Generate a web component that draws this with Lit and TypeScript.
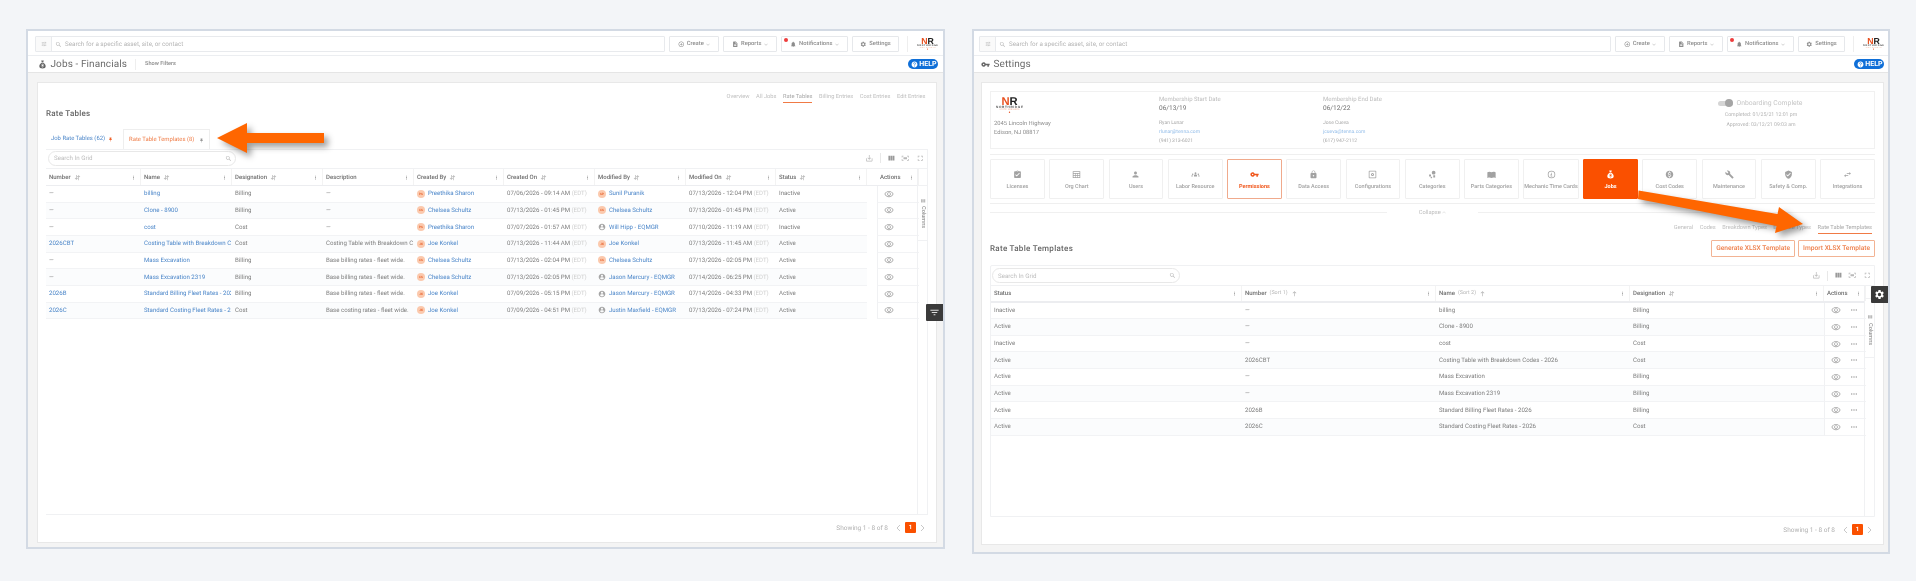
import { LitElement, html, css, nothing } from "lit";
import { customElement } from "lit/decorators.js";

const I = {
  tune: "M3 17v2h6v-2H3zM3 5v2h10V5H3zm10 16v-2h8v-2h-8v-2h-2v6h2zM7 9v2H3v2h4v2h2V9H7zm14 4v-2H11v2h10zm-6-4h2V7h4V5h-4V3h-2v6z",
  search: "M15.5 14h-.79l-.28-.27C15.41 12.59 16 11.11 16 9.5 16 5.91 13.09 3 9.5 3S3 5.91 3 9.5 5.91 16 9.5 16c1.61 0 3.09-.59 4.23-1.57l.27.28v.79l5 4.99L20.49 19l-4.99-5zm-6 0C7.01 14 5 11.99 5 9.5S7.01 5 9.5 5 14 7.01 14 9.5 11.99 14 9.5 14z",
  add: "M13 7h-2v4H7v2h4v4h2v-4h4v-2h-4V7zm-1-5C6.48 2 2 6.48 2 12s4.48 10 10 10 10-4.48 10-10S17.52 2 12 2zm0 18c-4.41 0-8-3.59-8-8s3.59-8 8-8 8 3.59 8 8-3.59 8-8 8z",
  doc: "M14 2H6c-1.1 0-2 .9-2 2v16c0 1.1.9 2 2 2h12c1.1 0 2-.9 2-2V8l-6-6zm2 16H8v-2h8v2zm0-4H8v-2h8v2zm-3-5V3.5L18.5 9H13z",
  bell: "M12 22c1.1 0 2-.9 2-2h-4c0 1.1.89 2 2 2zm6-6v-5c0-3.07-1.64-5.64-4.5-6.32V4c0-.83-.67-1.5-1.5-1.5s-1.5.67-1.5 1.5v.68C7.63 5.36 6 7.92 6 11v5l-2 2v1h16v-1l-2-2z",
  gear: "M19.14 12.94c.04-.3.06-.61.06-.94 0-.32-.02-.64-.07-.94l2.03-1.58c.18-.14.23-.41.12-.61l-1.92-3.32c-.12-.22-.37-.29-.59-.22l-2.39.96c-.5-.38-1.03-.7-1.62-.94l-.36-2.54c-.04-.24-.24-.41-.48-.41h-3.84c-.24 0-.43.17-.47.41l-.36 2.54c-.59.24-1.13.57-1.62.94l-2.39-.96c-.22-.08-.47 0-.59.22L2.74 8.87c-.12.21-.08.47.12.61l2.03 1.58c-.05.3-.09.63-.09.94s.02.64.07.94l-2.03 1.58c-.18.14-.23.41-.12.61l1.92 3.32c.12.22.37.29.59.22l2.39-.96c.5.38 1.03.7 1.62.94l.36 2.54c.05.24.24.41.48.41h3.84c.24 0 .44-.17.47-.41l.36-2.54c.59-.24 1.13-.56 1.62-.94l2.39.96c.22.08.47 0 .59-.22l1.92-3.32c.12-.22.07-.47-.12-.61l-2.01-1.58zM12 15.6c-1.98 0-3.6-1.62-3.6-3.6s1.62-3.6 3.6-3.6 3.6 1.62 3.6 3.6-1.62 3.6-3.6 3.6z",
  help: "M12 2C6.48 2 2 6.48 2 12s4.48 10 10 10 10-4.48 10-10S17.52 2 12 2zm1 17h-2v-2h2v2zm2.07-7.75l-.9.92C13.45 12.9 13 13.5 13 15h-2v-.5c0-1.1.45-2.1 1.17-2.83l1.24-1.26c.37-.36.59-.86.59-1.41 0-1.1-.9-2-2-2s-2 .9-2 2H8c0-2.21 1.79-4 4-4s4 1.79 4 4c0 .88-.36 1.68-.93 2.25z",
  bag: "M8.5 1.5h7L14 6h-4L8.5 1.5zM9.6 7h4.8C18 9.3 20.5 13 20.5 16.5c0 3.6-3 6-8.5 6s-8.5-2.4-8.5-6C3.5 13 6 9.3 9.6 7zm1.6 3v1.2c-1.3.3-2.2 1.2-2.2 2.4 0 1.5 1.2 2.1 2.7 2.5 1.1.3 1.5.6 1.5 1.1 0 .5-.5.9-1.3.9-.9 0-1.5-.4-1.6-1.1H9c.1 1.3 1 2.2 2.2 2.5V20h1.6v-1.5c1.3-.3 2.2-1.2 2.2-2.4 0-1.6-1.3-2.2-2.8-2.6-1-.3-1.4-.5-1.4-1 0-.4.5-.8 1.2-.8.8 0 1.2.4 1.3 1H15c-.1-1.2-.9-2.1-2.2-2.4V10h-1.6z",
  key: "M12.65 10C11.83 7.67 9.61 6 7 6c-3.31 0-6 2.69-6 6s2.69 6 6 6c2.61 0 4.83-1.67 5.65-4H17v4h4v-4h2v-4H12.65zM7 14c-1.1 0-2-.9-2-2s.9-2 2-2 2 .9 2 2-.9 2-2 2z",
  pin: "M16 9V4h1V2H7v2h1v5c0 1.66-1.34 3-3 3v2h5.97v7l1 1 1-1v-7H19v-2c-1.66 0-3-1.34-3-3z",
  download: "M19 12v7H5v-7H3v7c0 1.1.9 2 2 2h14c1.1 0 2-.9 2-2v-7h-2zm-6 .67l2.59-2.58L17 11.5l-5 5-5-5 1.41-1.41L11 12.67V3h2z",
  columns: "M10 18h5V5h-5v13zm-6 0h5V5H4v13zM16 5v13h5V5h-5z",
  fit: "M2 5h5v2H4v3H2V5zm15 0h5v5h-2V7h-3V5zM2 14h2v3h3v2H2v-5zm18 0h2v5h-5v-2h3v-3zM7 9h10v6H7z",
  full: "M7 14H5v5h5v-2H7v-3zm-2-4h2V7h3V5H5v5zm12 7h-3v2h5v-5h-2v3zM14 5v2h3v3h2V5h-5z",
  eye: "M12 6.5c3.79 0 7.17 2.13 8.82 5.5-1.65 3.37-5.02 5.5-8.82 5.5S4.83 15.37 3.18 12C4.83 8.63 8.21 6.5 12 6.5m0-2C7 4.5 2.73 7.61 1 12c1.73 4.39 6 7.5 11 7.5s9.27-3.11 11-7.5c-1.73-4.39-6-7.5-11-7.5zm0 5c1.38 0 2.5 1.12 2.5 2.5s-1.12 2.5-2.5 2.5-2.5-1.12-2.5-2.5 1.12-2.5 2.5-2.5m0-2c-2.48 0-4.5 2.02-4.5 4.5s2.02 4.5 4.5 4.5 4.5-2.02 4.5-4.5-2.02-4.5-4.5-4.5z",
  filter: "M10 18h4v-2h-4v2zM3 6v2h18V6H3zm3 7h12v-2H6v2z",
  person: "M12 2C6.48 2 2 6.48 2 12s4.48 10 10 10 10-4.48 10-10S17.52 2 12 2zm0 3c1.66 0 3 1.34 3 3s-1.34 3-3 3-3-1.34-3-3 1.34-3 3-3zm0 14.2c-2.5 0-4.71-1.28-6-3.22.03-1.99 4-3.08 6-3.08 1.99 0 5.97 1.09 6 3.08-1.29 1.94-3.5 3.22-6 3.22z",
  license: "M19 3h-4.18C14.4 1.84 13.3 1 12 1c-1.3 0-2.4.84-2.82 2H5c-1.1 0-2 .9-2 2v14c0 1.1.9 2 2 2h14c1.1 0 2-.9 2-2V5c0-1.1-.9-2-2-2zm-7 0c.55 0 1 .45 1 1s-.45 1-1 1-1-.45-1-1 .45-1 1-1zm-2 14l-4-4 1.41-1.41L10 14.17l6.59-6.59L18 9l-8 8z",
  org: "M2 3h20v18H2V3zm2 2v3h16V5H4zm0 5v4h4.5v-4H4zm6 0v4h4v-4h-4zm5.5 0v4H20v-4h-4.5zM4 16v3h4.5v-3H4zm6 0v3h4v-3h-4zm5.5 0v3H20v-3h-4.5z",
  user: "M12 12c2.21 0 4-1.79 4-4s-1.79-4-4-4-4 1.79-4 4 1.79 4 4 4zm0 2c-2.67 0-8 1.34-8 4v2h16v-2c0-2.66-5.33-4-8-4z",
  labor: "M12 6a2.5 2.5 0 1 1 0 5 2.5 2.5 0 0 1 0-5zM8 13.5c0-1 2-1.5 4-1.5s4 .5 4 1.5V17H8v-3.5zM4.5 9a2 2 0 1 1 0 4 2 2 0 0 1 0-4zM1 15c0-.8 1.5-1.3 3.5-1.3V17H1v-2zM19.5 9a2 2 0 1 1 0 4 2 2 0 0 1 0-4zM23 15c0-.8-1.5-1.3-3.5-1.3V17H23v-2z",
  lock: "M18 8h-1V6c0-2.76-2.24-5-5-5S7 3.24 7 6v2H6c-1.1 0-2 .9-2 2v10c0 1.1.9 2 2 2h12c1.1 0 2-.9 2-2V10c0-1.1-.9-2-2-2zm-6 9c-1.1 0-2-.9-2-2s.9-2 2-2 2 .9 2 2-.9 2-2 2zm3.1-9H8.9V6c0-1.71 1.39-3.1 3.1-3.1 1.71 0 3.1 1.39 3.1 3.1v2z",
  config: "M4 2h16a2 2 0 0 1 2 2v16a2 2 0 0 1-2 2H4a2 2 0 0 1-2-2V4a2 2 0 0 1 2-2zm0 2v16h16V4H4zm8 4a4 4 0 1 1 0 8 4 4 0 0 1 0-8zm0 2.5a1.5 1.5 0 1 0 0 3 1.5 1.5 0 0 0 0-3z",
  category: "M15 2a5 5 0 1 1 0 10 5 5 0 0 1 0-10zM3 12h5v5H3v-5zM14 14h5v6h-5v-6zM7 20a2 2 0 1 1 0 .01z",
  book: "M21 5c-1.11-.35-2.33-.5-3.5-.5-1.95 0-4.05.4-5.5 1.5-1.45-1.1-3.55-1.5-5.5-1.5S2.45 4.9 1 6v14.65c0 .25.25.5.5.5.1 0 .15-.05.25-.05C3.1 20.45 5.05 20 6.5 20c1.95 0 4.05.4 5.5 1.5 1.35-.85 3.8-1.5 5.5-1.5 1.65 0 3.35.3 4.75 1.05.1.05.15.05.25.05.25 0 .5-.25.5-.5V6c-.6-.45-1.25-.75-2-1z",
  clock: "M12 2a10 10 0 1 1 0 20 10 10 0 0 1 0-20zm0 2a8 8 0 1 0 0 16 8 8 0 0 0 0-16zm1 3v7H8v-1.5c2 0 3.5-.5 3.5-2V7H13zm-3 8h4v2h-4z",
  dollar: "M12 2C6.48 2 2 6.48 2 12s4.48 10 10 10 10-4.48 10-10S17.52 2 12 2zm1.41 16.09V20h-2.67v-1.93c-1.71-.36-3.16-1.46-3.27-3.4h1.96c.1 1.05.82 1.87 2.65 1.87 1.96 0 2.4-.98 2.4-1.59 0-.83-.44-1.61-2.67-2.14-2.48-.6-4.18-1.62-4.18-3.67 0-1.72 1.39-2.84 3.11-3.21V4h2.67v1.95c1.86.45 2.79 1.86 2.85 3.39H14.3c-.05-1.11-.64-1.87-2.22-1.87-1.5 0-2.4.68-2.4 1.64 0 .84.65 1.39 2.67 1.91s4.18 1.39 4.18 3.91c-.01 1.83-1.38 2.83-3.12 3.16z",
  wrench: "M22.7 19l-9.1-9.1c.9-2.3.4-5-1.5-6.9-2-2-5-2.4-7.4-1.3L9 6 6 9 1.6 4.7C.4 7.1.9 10.1 2.9 12.1c1.9 1.9 4.6 2.4 6.9 1.5l9.1 9.1c.4.4 1 .4 1.4 0l2.3-2.3c.5-.4.5-1.1.1-1.4z",
  shield: "M12 1L3 5v6c0 5.55 3.84 10.74 9 12 5.16-1.26 9-6.45 9-12V5l-9-4zm-2 16l-4-4 1.41-1.41L10 14.17l6.59-6.59L18 9l-8 8z",
  swap: "M6.99 11L3 15l3.99 4v-3H14v-2H6.99v-3zM21 9l-3.99-4v3H10v2h7.01v3L21 9z",
  kebab: "M10 3h4v4h-4V3zm0 7h4v4h-4v-4zm0 7h4v4h-4v-4z",
  dots: "M3 10h4v4H3v-4zm7 0h4v4h-4v-4zm7 0h4v4h-4v-4z",
  sortBoth: "M7 3h2v13l3-3 1.4 1.4L8 20l-5.4-5.6L4 13l3 3V3zm8 18h2V8l3 3 1.4-1.4L16 4l-5.4 5.6L12 11l3-3v13z",
  sortUp: "M11 21h2V8l4 4 1.4-1.4L12 4 5.6 10.6 7 12l4-4v13z",
};

const icon = (d: string, cls = "") =>
  html`<svg class="ic ${cls}" viewBox="0 0 24 24" aria-hidden="true"><path d=${d}></path></svg>`;

const chevron = (cls = "") =>
  html`<svg class="chev ${cls}" viewBox="0 0 10 6" aria-hidden="true"><path d="M1 1l4 4 4-4"></path></svg>`;

const logo = (cls: string) => html`
  <svg class="logo ${cls}" viewBox="0 0 60 36" aria-hidden="true">
    <text class="logo-n" x="12" y="18">N</text>
    <text class="logo-r" x="30" y="18">R</text>
    <text class="logo-name" x="30" y="24" text-anchor="middle" textLength="60">NORTHRIDGE</text>
    <text class="logo-sub" x="30" y="30" text-anchor="middle" textLength="44">STATE SERVICES</text>
    <circle cx="30" cy="34" r="1.5" fill="#e8501f"></circle>
  </svg>
`;

type Person = { name: string; initials?: string };
const PS: Person = { name: "Preethika Sharon", initials: "PS" };
const CS: Person = { name: "Chelsea Schultz", initials: "CS" };
const SP: Person = { name: "Sunil Puranik", initials: "SP" };
const JK: Person = { name: "Joe Konkel", initials: "JK" };
const WH: Person = { name: "Will Hipp - EQMGR" };
const JM: Person = { name: "Jason Mercury - EQMGR" };
const JX: Person = { name: "Justin Maxfield - EQMGR" };

const BASE_BILL = "Base billing rates - fleet wide.";
const BASE_COST = "Base costing rates - fleet wide.";
const BREAK = "Costing Table with Breakdown Codes - 2026";

const RATES = [
  { no: "—", name: "billing", des: "Billing", desc: "—", by: PS, on: "07/06/2026 - 09:14 AM", mby: SP, mon: "07/13/2026 - 12:04 PM", status: "Inactive" },
  { no: "—", name: "Clone - 8900", des: "Billing", desc: "—", by: CS, on: "07/13/2026 - 01:45 PM", mby: CS, mon: "07/13/2026 - 01:45 PM", status: "Active" },
  { no: "—", name: "cost", des: "Cost", desc: "—", by: PS, on: "07/07/2026 - 01:57 AM", mby: WH, mon: "07/10/2026 - 11:19 AM", status: "Inactive" },
  { no: "2026CBT", name: BREAK, des: "Cost", desc: BREAK, by: JK, on: "07/13/2026 - 11:44 AM", mby: JK, mon: "07/13/2026 - 11:45 AM", status: "Active" },
  { no: "—", name: "Mass Excavation", des: "Billing", desc: BASE_BILL, by: CS, on: "07/13/2026 - 02:04 PM", mby: CS, mon: "07/13/2026 - 02:05 PM", status: "Active" },
  { no: "—", name: "Mass Excavation 2319", des: "Billing", desc: BASE_BILL, by: CS, on: "07/13/2026 - 02:05 PM", mby: JM, mon: "07/14/2026 - 06:25 PM", status: "Active" },
  { no: "2026B", name: "Standard Billing Fleet Rates - 2026", des: "Billing", desc: BASE_BILL, by: JK, on: "07/09/2026 - 05:15 PM", mby: JM, mon: "07/14/2026 - 04:33 PM", status: "Active" },
  { no: "2026C", name: "Standard Costing Fleet Rates - 2026", des: "Cost", desc: BASE_COST, by: JK, on: "07/09/2026 - 04:51 PM", mby: JX, mon: "07/13/2026 - 07:24 PM", status: "Active" },
];

const TILES = [
  ["Licenses", I.license],
  ["Org Chart", I.org],
  ["Users", I.user],
  ["Labor Resource", I.labor],
  ["Permissions", I.key, "outlined"],
  ["Data Access", I.lock],
  ["Configurations", I.config],
  ["Categories", I.category],
  ["Parts Categories", I.book],
  ["Mechanic Time Cards", I.clock],
  ["Jobs", I.bag, "filled"],
  ["Cost Codes", I.dollar],
  ["Maintenance", I.wrench],
  ["Safety & Comp.", I.shield],
  ["Integrations", I.swap],
];

@customElement("app-root")
export class AppRoot extends LitElement {
  static override styles = css`
    :host {
      display: block;
      position: relative;
      width: 1916px;
      height: 581px;
      overflow: hidden;
      background: #f3f5f8;
      font-family: Roboto, "Liberation Sans", sans-serif;
      font-size: 6.1px;
      color: #7d7d7d;
      text-rendering: geometricPrecision;
    }
    * {
      box-sizing: border-box;
    }
    .page {
      display: flex;
      align-items: flex-start;
      gap: 27px;
      padding: 29px 0 0 26px;
    }
    .ic {
      width: 8px;
      height: 8px;
      flex: none;
      fill: currentColor;
    }
    .chev {
      width: 4px;
      height: 3px;
      flex: none;
      fill: none;
      stroke: currentColor;
      stroke-width: 1;
    }
    .chev.up {
      transform: rotate(180deg);
    }

    /* window frame */
    .window {
      position: relative;
      display: flex;
      flex-direction: column;
      border: 2px solid #d3dae4;
      background: #f4f4f4;
      filter: blur(0.35px);
    }
    .window.jobs {
      width: 919px;
      height: 520px;
    }
    .window.settings {
      width: 918px;
      height: 525px;
    }
    .topbar {
      display: flex;
      gap: 4px;
      height: 25px;
      padding: 5px 5px 0 7px;
      background: #fff;
      border-bottom: 1px solid #eceef1;
    }
    .settings .topbar {
      padding-left: 5px;
      padding-right: 4px;
    }
    .searchbox {
      flex: 1;
      display: flex;
      height: 16px;
      border: 1px solid #e8eaed;
      border-radius: 1px;
      color: #b5b5b5;
      font-size: 6.3px;
    }
    .searchbox .pre {
      width: 16px;
      display: flex;
      align-items: center;
      justify-content: center;
      border-right: 1px solid #e8eaed;
      background: #fafafa;
    }
    .searchbox .pre .ic {
      width: 6px;
      height: 6px;
    }
    .searchbox .field {
      display: flex;
      align-items: center;
      gap: 3px;
      padding-left: 3px;
    }
    .searchbox .field .ic {
      width: 7px;
      height: 7px;
    }
    .tbtn {
      position: relative;
      display: flex;
      align-items: center;
      justify-content: center;
      gap: 2.5px;
      height: 16px;
      border: 1px solid #e6e8eb;
      border-radius: 1px;
      color: #8d8d8d;
      font-size: 5.8px;
      font-weight: 500;
    }
    .tbtn .ic {
      width: 6.5px;
      height: 6.5px;
    }
    .w-create {
      width: 50px;
    }
    .w-reports {
      width: 54px;
    }
    .w-notify {
      width: 67px;
    }
    .w-settings {
      width: 47px;
    }
    .dot {
      position: absolute;
      left: 2px;
      top: 1px;
      width: 4px;
      height: 4px;
      border-radius: 50%;
      background: #ee3c3c;
    }
    .sep {
      width: 1px;
      height: 16px;
      margin: 0 5px 0 4px;
      background: #eee;
    }
    .logo {
      flex: none;
    }
    .logo.small {
      width: 21px;
      height: 13px;
      margin-top: 1px;
    }
    .logo.large {
      display: block;
      width: 27px;
      height: 16.2px;
      margin-left: 2px;
    }
    .logo-n,
    .logo-r {
      font: 700 25px "Liberation Sans", sans-serif;
    }
    .logo-n {
      fill: #e8501f;
    }
    .logo-r {
      fill: #222;
    }
    .logo-name {
      font: 700 7px "Liberation Sans", sans-serif;
      fill: #555;
    }
    .logo-sub {
      font: 400 4.5px "Liberation Sans", sans-serif;
      fill: #e99a7c;
    }
    .titlebar {
      display: flex;
      align-items: center;
      height: 17px;
      padding: 0 5px 0 10px;
      background: #fff;
      border-bottom: 1px solid #e5e5e5;
    }
    .settings .titlebar {
      padding: 0 4px 0 7px;
    }
    .titlebar .ic {
      width: 9px;
      height: 9px;
      color: #666;
    }
    .titlebar h1 {
      margin: 0 0 0 3.5px;
      font-size: 10px;
      font-weight: 400;
      color: #6c6c6c;
      letter-spacing: 0.1px;
    }
    .show-filters {
      margin-left: 8px;
      padding-left: 9px;
      height: 11px;
      line-height: 11px;
      border-left: 1px solid #eee;
      font-size: 5.6px;
      font-weight: 500;
      color: #8a8a8a;
    }
    .help {
      margin-left: auto;
      display: flex;
      align-items: center;
      gap: 1.5px;
      height: 10px;
      padding: 0 1.5px 0 2.5px;
      border-radius: 5px;
      background: #0f6fd8;
      color: #fff;
      font-size: 7px;
      font-weight: 700;
    }
    .help .ic {
      width: 7px;
      height: 7px;
      color: #fff;
    }
    .main {
      flex: 1;
      display: flex;
      min-height: 0;
      padding: 9px 6px 4px 9px;
    }
    .settings .main {
      padding: 9px 4px 7px 7px;
    }
    .card {
      flex: 1;
      min-width: 0;
      display: flex;
      flex-direction: column;
      padding: 9px 8px 0;
      background: #fff;
      border: 1px solid #e8e8e8;
    }
    .settings .card {
      padding-top: 8px;
    }

    /* section tabs */
    .subnav {
      flex: none;
      display: flex;
      justify-content: flex-end;
      gap: 6.5px;
      height: 11px;
      padding-right: 2.5px;
      color: #c0c0c0;
      font-size: 5.7px;
    }
    .subnav span {
      height: 10.5px;
      line-height: 10px;
    }
    .subnav .on {
      color: #a8a8a8;
      border-bottom: 1px solid #f07a45;
    }
    .settings .subnav {
      margin-top: 5px;
      padding-right: 3px;
    }
    h2 {
      margin: 0;
      font-size: 8px;
      font-weight: 500;
      color: #666;
      letter-spacing: 0.25px;
      line-height: 12px;
    }
    .jobs h2 {
      margin-top: 5px;
    }
    .tabs {
      flex: none;
      display: flex;
      height: 20px;
      margin-top: 9px;
      font-size: 5.9px;
    }
    .tab {
      display: flex;
      align-items: center;
      gap: 3px;
      padding: 0 5px;
      color: #4b86c9;
    }
    .tab .ic {
      width: 5px;
      height: 5px;
      color: #f0622a;
    }
    .tab.active {
      height: 21px;
      margin-left: 5px;
      gap: 4.5px;
      color: #ef7b45;
      background: #fff;
      border: 1px solid #eeeeee;
      border-bottom: none;
    }
    .tab.active .ic {
      color: #999;
    }

    /* data grid */
    .grid {
      flex: 1;
      min-height: 0;
      display: flex;
      flex-direction: column;
      border: 1px solid #f0f1f3;
      border-left-width: 0;
    }
    .toolbar {
      flex: none;
      display: flex;
      align-items: center;
      height: 19px;
      padding: 0 3px 2px 2px;
      border-bottom: 1px solid #f0f1f3;
    }
    .pill {
      display: flex;
      align-items: center;
      justify-content: space-between;
      width: 188px;
      height: 15px;
      padding: 0 3px 0 5px;
      border: 1px solid #e8e8e8;
      border-radius: 8px;
      color: #bdbdbd;
      font-size: 6.2px;
    }
    .pill .ic {
      width: 7px;
      height: 7px;
      color: #b5b5b5;
    }
    .tools {
      margin-left: auto;
      display: flex;
      align-items: center;
      gap: 6px;
      color: #b9b9b9;
    }
    .tools .ic {
      width: 8.5px;
      height: 8.5px;
    }
    .tools i {
      width: 1px;
      height: 10px;
      background: #e8e8e8;
    }
    .tools .dark {
      color: #9a9a9a;
    }
    .grid-body {
      flex: 1;
      min-height: 0;
      display: flex;
    }
    .table {
      flex: 1;
      min-width: 0;
    }
    .side {
      flex: none;
      width: 10px;
      padding-top: 16px;
      border-left: 1px solid #f0f1f3;
    }
    .side-tab {
      display: flex;
      flex-direction: column;
      align-items: center;
      gap: 2px;
      height: 56px;
      padding-top: 12px;
      border-top: 1px solid #f0f1f3;
      border-bottom: 1px solid #f0f1f3;
      color: #999;
    }
    .settings .side {
      padding-top: 12px;
    }
    .settings .side-tab {
      height: 60px;
      padding-top: 15px;
      gap: 3px;
    }
    .side-tab .ic {
      width: 6px;
      height: 6px;
      color: #bbb;
    }
    .side-tab span {
      writing-mode: vertical-rl;
      font-size: 5.6px;
      font-weight: 500;
    }
    .head,
    .row {
      display: grid;
      align-items: center;
    }
    .jobs .head,
    .jobs .row {
      grid-template-columns: 95px 91px 91px 91px 90px 91px 91px 90px 91px 10px 42px;
    }
    .settings .head,
    .settings .row {
      grid-template-columns: 251px 194px 194px 194px 42px;
    }
    .head {
      height: 17px;
      border-bottom: 1px solid #ecedf0;
      color: #6e6e6e;
      font-size: 6px;
      font-weight: 500;
    }
    .settings .head {
      height: 16.5px;
      border-bottom-width: 2px;
    }
    .hcell {
      display: flex;
      align-items: center;
      gap: 3px;
      height: 100%;
      padding: 0 4.5px 0 3px;
      border-right: 1px solid #f3f3f3;
      white-space: nowrap;
    }
    .hcell .sort {
      width: 7px;
      height: 7px;
      color: #aaa;
    }
    .hcell .kebab {
      width: 5px;
      height: 5px;
      margin-left: auto;
      color: #999;
    }
    .hcell small {
      font-size: 5.4px;
      font-weight: 400;
      color: #b5b5b5;
    }
    .hcell.blank {
      border-right: none;
    }
    .row {
      height: 16.67px;
    }
    .row > div {
      display: flex;
      align-items: center;
      height: 100%;
      min-width: 0;
      padding: 0 0 0 3px;
      white-space: nowrap;
      overflow: hidden;
      border-bottom: 1px solid #f2f3f5;
    }
    .row:nth-child(odd) > div:not(.actions, .blank) {
      background: #fbfcfd;
    }
    .row > div.blank {
      border-bottom: none;
    }
    .row .clip {
      display: block;
      overflow: hidden;
    }
    .row .name {
      padding-right: 1px;
    }
    .link {
      color: #4b86c9;
    }
    .muted {
      margin-left: 1.5px;
      color: #cfcfcf;
    }
    .avatar {
      flex: none;
      width: 8px;
      height: 8px;
      margin-right: 3px;
      border-radius: 50%;
      background: #fbc9ad;
      color: #e8602a;
      font-size: 3px;
      font-weight: 700;
      line-height: 8px;
      text-align: center;
    }
    .grey {
      color: #a6a6a6;
      background: none;
    }
    .grey .ic {
      display: block;
      width: 8px;
      height: 8px;
    }
    .actions {
      gap: 9px;
      border-left: 1px solid #f0f1f3;
      color: #a8a8a8;
    }
    .row > .actions.only,
    .row > .actions.both {
      padding-left: 6px;
    }
    .actions .ic {
      width: 10px;
      height: 10px;
    }
    .actions .more {
      width: 8px;
      height: 8px;
      color: #b2b2b2;
    }
    .foot {
      flex: none;
      display: flex;
      align-items: center;
      justify-content: flex-end;
      gap: 4px;
      height: 27px;
      padding: 0 3px 2px 0;
      color: #b0b0b0;
      font-size: 6.5px;
    }
    .foot .count {
      margin-right: 4px;
    }
    .foot .pg {
      width: 5px;
      height: 8px;
      fill: none;
      stroke: #c8c8c8;
      stroke-width: 1;
    }
    .foot b {
      width: 11px;
      height: 11px;
      border-radius: 1px;
      background: #fa5000;
      color: #fff;
      font-size: 6px;
      font-weight: 700;
      line-height: 11px;
      text-align: center;
    }
    .float {
      position: absolute;
      right: 0;
      display: flex;
      align-items: center;
      justify-content: center;
      width: 17px;
      height: 17px;
      background: #3a3a3a;
      color: #ddd;
      border-radius: 1px 0 0 1px;
    }
    .jobs .float {
      top: 273px;
    }
    .settings .float {
      top: 255px;
      color: #fff;
    }
    .float .ic {
      width: 11px;
      height: 11px;
    }

    /* settings header */
    .profile {
      flex: none;
      display: flex;
      height: 58px;
      padding: 5px 0 0 3px;
      border: 1px solid #f1f1f1;
      font-size: 5px;
      color: #a8a8a8;
    }
    .addr {
      width: 165px;
    }
    .addr p {
      margin: 6.6px 0 0;
      font-size: 5.8px;
      line-height: 9.7px;
      color: #8c8c8c;
    }
    .member {
      width: 164px;
      margin-top: -1.7px;
      line-height: 9px;
    }
    .member .lbl {
      font-size: 6px;
      color: #bcbcbc;
    }
    .member .val {
      margin-bottom: 6px;
      font-size: 6.5px;
      color: #6f6f6f;
    }
    .member a {
      display: block;
      color: #93bde9;
    }
    .onboard {
      width: 100px;
      margin: -1px 63px 0 auto;
      text-align: center;
      line-height: 10px;
      font-size: 5.2px;
      color: #b5b5b5;
    }
    .switch {
      display: flex;
      align-items: center;
      gap: 3.5px;
      height: 14px;
      padding-left: 7px;
      font-size: 6.8px;
      color: #c6c6c6;
      white-space: nowrap;
    }
    .switch i {
      position: relative;
      flex: none;
      width: 15px;
      height: 5px;
      border-radius: 3px;
      background: #d5d5d5;
    }
    .switch i::after {
      content: "";
      position: absolute;
      right: 0;
      top: -1.5px;
      width: 8px;
      height: 8px;
      border-radius: 50%;
      background: #a5a5a5;
    }
    .rule {
      flex: none;
      height: 1px;
      margin-top: 5px;
      background: #efefef;
    }
    .tiles {
      flex: none;
      display: grid;
      grid-template-columns: repeat(15, 1fr);
      gap: 4.3px;
      height: 40px;
      margin-top: 4px;
    }
    .tile {
      display: flex;
      flex-direction: column;
      align-items: center;
      gap: 4.5px;
      padding-top: 10px;
      border: 1px solid #f0f0f0;
      border-radius: 1px;
      color: #a2a2a2;
      font-size: 5.5px;
      font-weight: 500;
      white-space: nowrap;
    }
    .tile .ic {
      width: 9px;
      height: 9px;
    }
    .tile.outlined {
      color: #f0561b;
      border-color: #f0aa8c;
      font-weight: 700;
    }
    .tile.filled {
      color: #fff;
      background: #fa5000;
      border-color: #fa5000;
      font-weight: 700;
    }
    .tiles + .rule {
      margin-top: 4px;
    }
    .collapse {
      flex: none;
      display: flex;
      align-items: center;
      gap: 4px;
      height: 11px;
      margin-top: 3px;
      color: #bdbdbd;
      font-size: 5.7px;
    }
    .collapse hr {
      flex: 1;
      height: 1px;
      margin: 0;
      border: none;
      background: #f0f0f0;
    }
    .collapse span {
      display: flex;
      align-items: center;
      gap: 1.5px;
      margin: 0 28px;
    }
    .rt-head {
      flex: none;
      display: flex;
      align-items: center;
      justify-content: space-between;
      height: 17px;
      margin-top: 6px;
    }
    .rt-head h2 {
      letter-spacing: 0.3px;
    }
    .rt-btns {
      display: flex;
      gap: 3px;
    }
    .rt-btns span {
      height: 17px;
      padding: 0 4px;
      line-height: 15px;
      border: 1px solid #f2b394;
      border-radius: 1px;
      color: #ee7f4b;
      font-size: 6.65px;
      font-weight: 500;
    }
    .settings .grid {
      flex: 1;
      margin-top: 8px;
      border-left-width: 1px;
      border-top-left-radius: 2px;
    }
    .settings .toolbar {
      height: 20px;
      padding: 0 3px 0 1px;
    }

    /* call-out arrows laid over the screenshot */
    .callouts {
      position: absolute;
      inset: 0;
      width: 1916px;
      height: 581px;
      pointer-events: none;
      filter: drop-shadow(4px 4px 3px rgba(0, 0, 0, 0.38));
    }
    .callouts polygon {
      fill: #ff6600;
    }
  `;

  private _topbar() {
    return html`
      <div class="topbar">
        <div class="searchbox">
          <div class="pre">${icon(I.tune)}</div>
          <div class="field">${icon(I.search)}Search for a specific asset, site, or contact</div>
        </div>
        <div class="tbtn w-create">${icon(I.add)}Create ${chevron()}</div>
        <div class="tbtn w-reports">${icon(I.doc)}Reports ${chevron()}</div>
        <div class="tbtn w-notify"><span class="dot"></span>${icon(I.bell)}Notifications ${chevron()}</div>
        <div class="tbtn w-settings">${icon(I.gear)}Settings</div>
        <div class="sep"></div>
        ${logo("small")}
      </div>
    `;
  }

  private _help() {
    return html`<div class="help">${icon(I.help)}HELP</div>`;
  }

  private _tools() {
    return html`
      <div class="tools">
        ${icon(I.download)}<i></i>${icon(I.columns, "dark")}${icon(I.fit)}${icon(I.full)}
      </div>
    `;
  }

  private _pill() {
    return html`<div class="pill">Search In Grid ${icon(I.search)}</div>`;
  }

  private _side() {
    return html`
      <div class="side">
        <div class="side-tab">${icon(I.columns)}<span>Columns</span></div>
      </div>
    `;
  }

  private _hcell(label: string, sort = true, extra: unknown = nothing) {
    return html`
      <div class="hcell">
        ${label} ${extra} ${sort ? icon(I.sortBoth, "sort") : nothing} ${icon(I.kebab, "kebab")}
      </div>
    `;
  }

  private _foot() {
    return html`
      <div class="foot">
        <span class="count">Showing 1 - 8 of 8</span>
        <svg class="pg" viewBox="0 0 5 8"><path d="M4 1L1 4l3 3"></path></svg>
        <b>1</b>
        <svg class="pg" viewBox="0 0 5 8"><path d="M1 1l3 3-3 3"></path></svg>
      </div>
    `;
  }

  private _person(p: Person) {
    return html`
      ${p.initials
        ? html`<span class="avatar">${p.initials}</span>`
        : html`<span class="avatar grey">${icon(I.person)}</span>`}
      <span class="link">${p.name}</span>
    `;
  }

  private _date(value: string) {
    return html`${value}<span class="muted">(EDT)</span>`;
  }

  private _jobsWindow() {
    return html`
      <section class="window jobs">
        ${this._topbar()}
        <div class="titlebar">
          ${icon(I.bag)}
          <h1>Jobs - Financials</h1>
          <span class="show-filters">Show Filters</span>
          ${this._help()}
        </div>
        <div class="main">
          <div class="card">
            <div class="subnav">
              <span>Overview</span><span>All Jobs</span><span class="on">Rate Tables</span>
              <span>Billing Entries</span><span>Cost Entries</span><span>Edit Entries</span>
            </div>
            <h2>Rate Tables</h2>
            <div class="tabs">
              <div class="tab">Job Rate Tables (62) ${icon(I.pin)}</div>
              <div class="tab active">Rate Table Templates (8) ${icon(I.pin)}</div>
            </div>
            <div class="grid">
              <div class="toolbar">${this._pill()} ${this._tools()}</div>
              <div class="grid-body">
                <div class="table">
                  <div class="head">
                    ${this._hcell("Number")} ${this._hcell("Name")} ${this._hcell("Designation")}
                    ${this._hcell("Description", false)} ${this._hcell("Created By")}
                    ${this._hcell("Created On")} ${this._hcell("Modified By")}
                    ${this._hcell("Modified On")} ${this._hcell("Status")}
                    <div class="hcell blank"></div>
                    ${this._hcell("Actions", false)}
                  </div>
                  ${RATES.map(
                    (r) => html`
                      <div class="row">
                        <div class=${r.no === "—" ? "" : "link"}>${r.no}</div>
                        <div class="name"><span class="clip link">${r.name}</span></div>
                        <div>${r.des}</div>
                        <div class="name"><span class="clip">${r.desc}</span></div>
                        <div>${this._person(r.by)}</div>
                        <div>${this._date(r.on)}</div>
                        <div>${this._person(r.mby)}</div>
                        <div>${this._date(r.mon)}</div>
                        <div>${r.status}</div>
                        <div class="blank"></div>
                        <div class="actions only">${icon(I.eye)}</div>
                      </div>
                    `
                  )}
                </div>
                ${this._side()}
              </div>
            </div>
            ${this._foot()}
          </div>
        </div>
        <div class="float">${icon(I.filter)}</div>
      </section>
    `;
  }

  private _settingsWindow() {
    return html`
      <section class="window settings">
        ${this._topbar()}
        <div class="titlebar">
          ${icon(I.key)}
          <h1>Settings</h1>
          ${this._help()}
        </div>
        <div class="main">
          <div class="card">
            <div class="profile">
              <div class="addr">
                ${logo("large")}
                <p>2045 Lincoln Highway<br />Edison, NJ 08817</p>
              </div>
              <div class="member">
                <div class="lbl">Membership Start Date</div>
                <div class="val">06/13/19</div>
                <div>Ryan Lunar</div>
                <a>rlunar@tenna.com</a>
                <div>(941) 313-6021</div>
              </div>
              <div class="member">
                <div class="lbl">Membership End Date</div>
                <div class="val">06/12/22</div>
                <div>Jose Cueva</div>
                <a>jcueva@tenna.com</a>
                <div>(617) 947-2112</div>
              </div>
              <div class="onboard">
                <div class="switch"><i></i>Onboarding Complete</div>
                <div>Completed: 01/25/21 12:01 pm</div>
                <div>Approved: 03/12/21 09:03 am</div>
              </div>
            </div>
            <div class="rule"></div>
            <div class="tiles">
              ${TILES.map(
                ([label, d, kind]) => html`
                  <div class="tile ${kind ?? ""}">${icon(d)}<span>${label}</span></div>
                `
              )}
            </div>
            <div class="rule"></div>
            <div class="collapse">
              <hr /><span>Collapse ${chevron("up")}</span><hr />
            </div>
            <div class="subnav">
              <span>General</span><span>Codes</span><span>Breakdown Types</span>
              <span>Expense Types</span><span class="on">Rate Table Templates</span>
            </div>
            <div class="rt-head">
              <h2>Rate Table Templates</h2>
              <div class="rt-btns">
                <span>Generate XLSX Template</span><span>Import XLSX Template</span>
              </div>
            </div>
            <div class="grid">
              <div class="toolbar">${this._pill()} ${this._tools()}</div>
              <div class="grid-body">
                <div class="table">
                  <div class="head">
                    ${this._hcell("Status", false)}
                    ${this._hcell("Number", false, html`<small>(Sort 1)</small>${icon(I.sortUp, "sort")}`)}
                    ${this._hcell("Name", false, html`<small>(Sort 2)</small>${icon(I.sortUp, "sort")}`)}
                    ${this._hcell("Designation")} ${this._hcell("Actions", false)}
                  </div>
                  ${RATES.map(
                    (r) => html`
                      <div class="row">
                        <div>${r.status}</div>
                        <div>${r.no}</div>
                        <div>${r.name}</div>
                        <div>${r.des}</div>
                        <div class="actions both">${icon(I.eye)}${icon(I.dots, "more")}</div>
                      </div>
                    `
                  )}
                </div>
                ${this._side()}
              </div>
            </div>
            ${this._foot()}
          </div>
        </div>
        <div class="float">${icon(I.gear)}</div>
      </section>
    `;
  }

  override render() {
    return html`
      <div class="page">${this._jobsWindow()} ${this._settingsWindow()}</div>
      <svg class="callouts" viewBox="0 0 1916 581" aria-hidden="true">
        <polygon points="217,138 247,123 247,133 324,133 324,143 247,143 247,153"></polygon>
        <polygon points="1638.5,190.5 1777.5,214 1779,207 1803,224 1775,233 1776.5,226 1638,199"></polygon>
      </svg>
    `;
  }
}
